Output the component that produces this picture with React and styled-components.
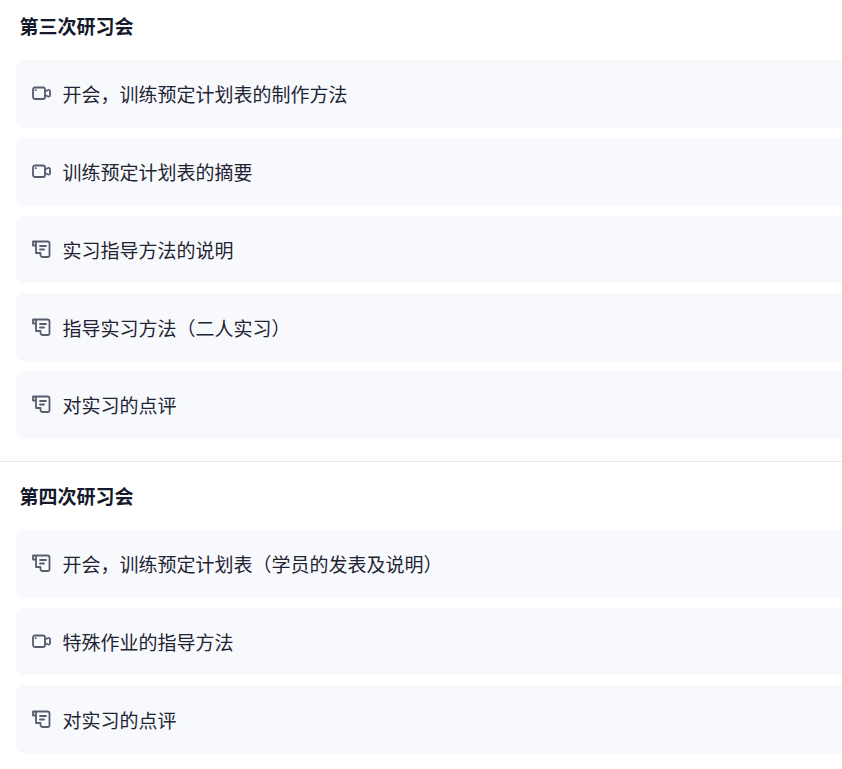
import React from 'react';
import styled, { createGlobalStyle } from 'styled-components';

const GlobalStyle = createGlobalStyle`
  html, body {
    margin: 0;
    padding: 0;
    background: #fff;
    overflow: hidden;
    font-family: "Noto Sans CJK SC", Inter, sans-serif;
  }
`;

const Page = styled.div`
  width: 842px;
  height: 769px;
  overflow: hidden;
`;

const Section = styled.section`
  padding: 0 0 22px 16px;
  border-bottom: ${(p) => (p.$divided ? '1px solid #e5e7eb' : 'none')};
  margin-bottom: 8px;
`;

const Title = styled.h3`
  margin: 0;
  padding: 14px 0 22px 3.5px;
  font-size: 19px;
  line-height: 24px;
  font-weight: 700;
  color: #141a2b;
`;

const List = styled.div`
  display: flex;
  flex-direction: column;
  gap: 10px;
`;

const Row = styled.div`
  display: flex;
  align-items: center;
  gap: 11.5px;
  height: 67.75px;
  padding-left: 16px;
  background: #f8f9fd;
  border-radius: 8px 0 0 8px;
  font-size: 19px;
  color: #1f2433;
`;

const Svg = styled.svg`
  width: 19px;
  height: 19px;
  flex: none;
  fill: none;
  stroke: #565d6c;
  stroke-width: 1.8;
  stroke-linecap: round;
  stroke-linejoin: round;
`;

const VideoIcon = () => (
  <Svg viewBox="0 0 19 19">
    <rect x="1" y="3.5" width="12" height="11.5" rx="2" />
    <path d="M13 7.5 L16 6 Q18 5.5 18 7.5 V11 Q18 13 16 12.5 L13 11" />
    <path d="M3.6 6.2 H3.8" />
  </Svg>
);

const DocIcon = () => (
  <Svg viewBox="0 0 19 19">
    <path d="M1 1.5 H15.5 A2 2 0 0 1 17.5 3.5 V15.5 A1.5 1.5 0 0 1 16 17 H10.5 A2 2 0 0 1 8.5 15 V13 H4 V3.5 A2 2 0 0 0 2 1.5 A1.2 1.2 0 0 0 1 3 V5.5 H4" />
    <path d="M8 6 H14 M8 9.5 H12" />
  </Svg>
);

const sections = [
  {
    title: '第三次研习会',
    items: [
      ['video', '开会\uFF0C训练预定计划表的制作方法'],
      ['video', '训练预定计划表的摘要'],
      ['doc', '实习指导方法的说明'],
      ['doc', '指导实习方法\uFF08二人实习\uFF09'],
      ['doc', '对实习的点评'],
    ],
  },
  {
    title: '第四次研习会',
    items: [
      ['doc', '开会\uFF0C训练预定计划表\uFF08学员的发表及说明\uFF09'],
      ['video', '特殊作业的指导方法'],
      ['doc', '对实习的点评'],
    ],
  },
];

export default function App() {
  return (
    <Page>
      <GlobalStyle />
      {sections.map((s, i) => (
        <Section key={s.title} $divided={i === 0}>
          <Title>{s.title}</Title>
          <List>
            {s.items.map(([kind, text], j) => (
              <Row key={j}>
                {kind === 'video' ? <VideoIcon /> : <DocIcon />}
                <span>{text}</span>
              </Row>
            ))}
          </List>
        </Section>
      ))}
    </Page>
  );
}
